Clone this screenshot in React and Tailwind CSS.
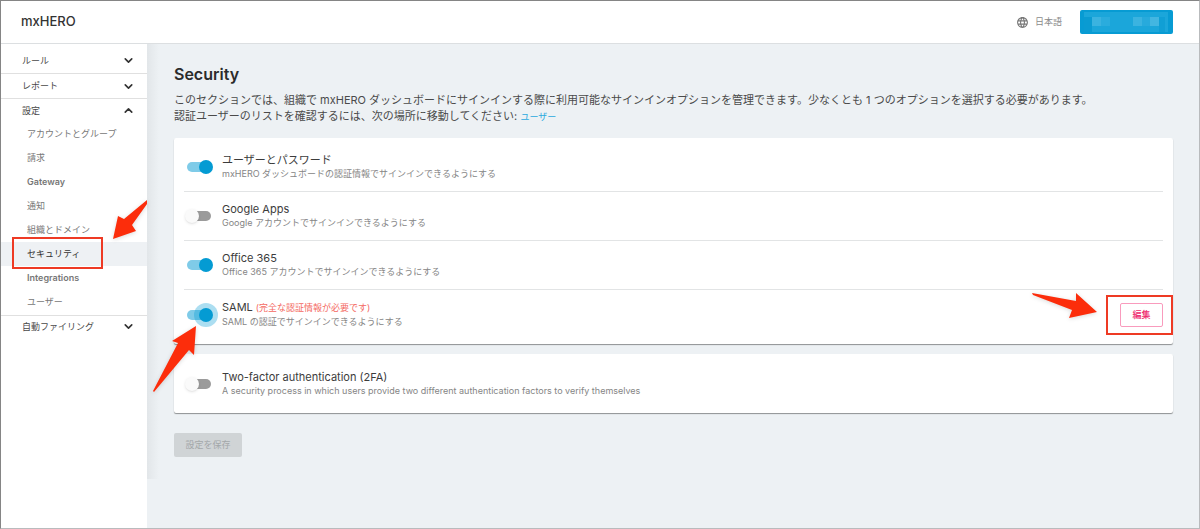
import { useState } from 'react'
import { ChevronDown, ChevronUp } from 'lucide-react'
import { MdLanguage } from 'react-icons/md'
import clsx from 'clsx'

const SETTINGS_ITEMS = [
  { id: 'groups', label: 'アカウントとグループ' },
  { id: 'billing', label: '請求' },
  { id: 'gateway', label: 'Gateway', strong: true },
  { id: 'notifications', label: '通知' },
  { id: 'domains', label: '組織とドメイン' },
  { id: 'security', label: 'セキュリティ', active: true },
  { id: 'integrations', label: 'Integrations', strong: true },
  { id: 'users', label: 'ユーザー' },
]

const SIGN_IN_OPTIONS = [
  { id: 'password', title: 'ユーザーとパスワード', text: 'mxHERO ダッシュボードの認証情報でサインインできるようにする' },
  { id: 'google', title: 'Google Apps', text: 'Google アカウントでサインインできるようにする' },
  { id: 'office', title: 'Office 365', text: 'Office 365 アカウントでサインインできるようにする' },
  { id: 'saml', title: 'SAML', note: '(完全な認証情報が必要です)', text: 'SAML の認証でサインインできるようにする', editable: true },
]

function Arrow({ points, viewBox, className }) {
  return (
    <svg viewBox={viewBox} className={clsx('absolute z-10 pointer-events-none drop-shadow-sm', className)} aria-hidden="true">
      <polygon points={points} fill="#fc2d0b" />
    </svg>
  )
}

function Toggle({ id, checked, onChange, ripple }) {
  return (
    <input id={id} type="checkbox" role="switch" checked={checked} onChange={onChange}
      className={clsx(
        'relative appearance-none shrink-0 w-6 h-2.5 rounded-full bg-[#9b9b9b] checked:bg-[#7fcbe8] cursor-pointer',
        'before:absolute before:-top-0.5 before:-left-0.5 before:size-3.5 before:rounded-full before:bg-[#fafafa] before:shadow',
        'checked:before:left-3 checked:before:bg-[#049bd3]',
        ripple ? 'before:shadow-[0_0_0_5px_rgba(4,155,211,0.33)]' : 'checked:before:shadow-none'
      )} />
  )
}

function OptionRow({ option, checked, onToggle, children }) {
  return (
    <div className="flex items-center h-[49px] pl-[3px]">
      <Toggle id={option.id} checked={checked} onChange={onToggle} ripple={option.id === 'saml'} />
      <label htmlFor={option.id} className="ml-[11px] flex-1 cursor-pointer">
        <span className="block text-[11px] leading-[14px] text-[#3c3c3c]">
          {option.title}
          {option.note && <span className="ml-[3px] text-[9px] text-[#f4695f]">{option.note}</span>}
        </span>
        <span className="block text-[9px] leading-[14px] text-[#858585]">{option.text}</span>
      </label>
      {children}
    </div>
  )
}

function NavSection({ label, open, className }) {
  const Icon = open ? ChevronUp : ChevronDown
  return (
    <button className={clsx('flex w-full items-center justify-between pl-[21px] pr-3 text-[9px] text-[#484848]', className)}>
      {label}
      <Icon size={13} strokeWidth={3} className="text-[#333]" />
    </button>
  )
}

function Sidebar() {
  return (
    <nav className="w-[146px] shrink-0 bg-white">
      <NavSection label="ルール" className="h-[30px] pt-1 border-b border-[#e0e0e0]" />
      <NavSection label="レポート" className="h-[25px] border-b border-[#e0e0e0]" />
      <NavSection label="設定" open className="h-[23px]" />
      <ul className="pb-px border-b border-[#e0e0e0]">
        {SETTINGS_ITEMS.map(item => (
          <li key={item.id} className="relative">
            <a href={`#${item.id}`}
              className={clsx('flex items-center h-6 pl-[26px] text-[9px]',
                item.active ? 'bg-[#eef1f4] text-[#333]' : 'text-[#777]',
                item.strong && 'font-semibold text-[#6a6a6a]')}>
              {item.label}
            </a>
            {item.active && (
              <>
                <div className="absolute -top-[5px] left-[11px] w-[91px] h-8 border-2 border-[#ee3a24] pointer-events-none" />
                <Arrow className="-top-[42px] left-[111px] w-9 h-10" viewBox="0 0 36 40"
                  points="1,39 6,16 12,19 35,0 35,4 20,25 24,31" />
              </>
            )}
          </li>
        ))}
      </ul>
      <NavSection label="自動ファイリング" className="h-[21px]" />
    </nav>
  )
}

function Header() {
  return (
    <header className="relative z-10 flex items-center h-[43px] pl-5 pr-[26px] bg-white border-b border-[#dcdfe1]">
      <span className="flex-1 text-[13px] font-medium text-[#333]">mxHERO</span>
      <button className="flex items-center gap-1.5 text-[9px] text-[#8a8a8a]">
        <MdLanguage size={13} className="text-[#777]" />
        日本語
      </button>
      <button aria-label="アカウント" className="ml-[18px] w-[93px] h-6 rounded-xs bg-[#079bd3] overflow-hidden">
        <svg viewBox="0 0 93 24" className="w-full h-full">
          <rect x="4" y="2" width="84" height="20" fill="#1ba6da" />
          <rect x="4" y="7" width="8" height="15" fill="#0a9bd2" />
          <rect x="12" y="7" width="9" height="9" fill="#3bb3e0" />
          <rect x="21" y="7" width="9" height="9" fill="#2aacdd" />
          <rect x="53" y="7" width="9" height="9" fill="#3bb3e0" />
          <rect x="62" y="7" width="8" height="9" fill="#27aadc" />
          <rect x="70" y="7" width="9" height="9" fill="#43b6e1" />
          <rect x="79" y="7" width="6" height="15" fill="#109fd5" />
        </svg>
      </button>
    </header>
  )
}

export default function App() {
  const [enabled, setEnabled] = useState({ password: true, google: false, office: true, saml: true, twofactor: false })

  const toggle = id => setEnabled(prev => ({ ...prev, [id]: !prev[id] }))

  return (
    <div className="flex flex-col min-h-screen bg-[#edf1f4] border border-[#b9bbbd] border-t-[#858585] border-l-[#858585] font-['Inter','Noto_Sans_CJK_JP',sans-serif]">
      <Header />
      <div className="flex flex-1">
        <Sidebar />
        <main className="relative flex-1 min-w-0 pl-[27px] pt-5 pr-[26px]">
          <div className="absolute top-0 left-0 w-3 h-[435px] bg-linear-to-r from-[#e2e6e9] to-[#edf1f4]" />

          <h1 className="text-[16px] leading-5 font-semibold text-[#2b2b2b]">Security</h1>
          <p className="mt-2 text-[11px] leading-4 text-[#4a4a4a]">
            このセクションでは、組織で mxHERO ダッシュボードにサインインする際に利用可能なサインインオプションを管理できます。少なくとも 1 つのオプションを選択する必要があります。
            <br />
            認証ユーザーのリストを確認するには、次の場所に移動してください: <a href="#users" className="text-[9px] text-[#2ba9de]">ユーザー</a>
          </p>

          <section className="relative mt-[13px] px-2.5 py-[5px] bg-white rounded-xs shadow-[0_1px_1px_rgba(0,0,0,0.4)]">
            <div className="divide-y divide-[#e2e4e5]">
              {SIGN_IN_OPTIONS.map(option => (
                <OptionRow key={option.id} option={option} checked={enabled[option.id]} onToggle={() => toggle(option.id)}>
                  {option.editable && (
                    <div className="relative">
                      <button className="block w-[43px] h-6 rounded-xs border border-[#f99bbd] text-[9px] font-medium text-[#ee2a6e]">編集</button>
                      <div className="absolute -top-2 -right-2.5 w-[67px] h-10 border-2 border-[#ee3a24] pointer-events-none" />
                      <Arrow className="-top-[11px] right-[65px] w-[66px] h-7" viewBox="0 0 66 28"
                        points="65,20 44,1 44,9 0,1 1,3 40,18 37,26" />
                    </div>
                  )}
                </OptionRow>
              ))}
            </div>
            <Arrow className="-bottom-12 -left-[21px] w-11 h-[67px]" viewBox="0 0 44 67"
              points="43,1 19,16 25,18 0,66 1,67 36,25 41,30" />
          </section>

          <section className="mt-2.5 px-2.5 py-[5px] bg-white rounded-xs shadow-[0_1px_1px_rgba(0,0,0,0.4)]">
            <OptionRow
              option={{
                id: 'twofactor',
                title: 'Two-factor authentication (2FA)',
                text: 'A security process in which users provide two different authentication factors to verify themselves',
              }}
              checked={enabled.twofactor}
              onToggle={() => toggle('twofactor')}
            />
          </section>

          <button disabled className="mt-5 w-[68px] h-6 rounded-xs bg-[#d0d4d6] text-[9px] text-[#a3a7a9]">設定を保存</button>
        </main>
      </div>
    </div>
  )
}
